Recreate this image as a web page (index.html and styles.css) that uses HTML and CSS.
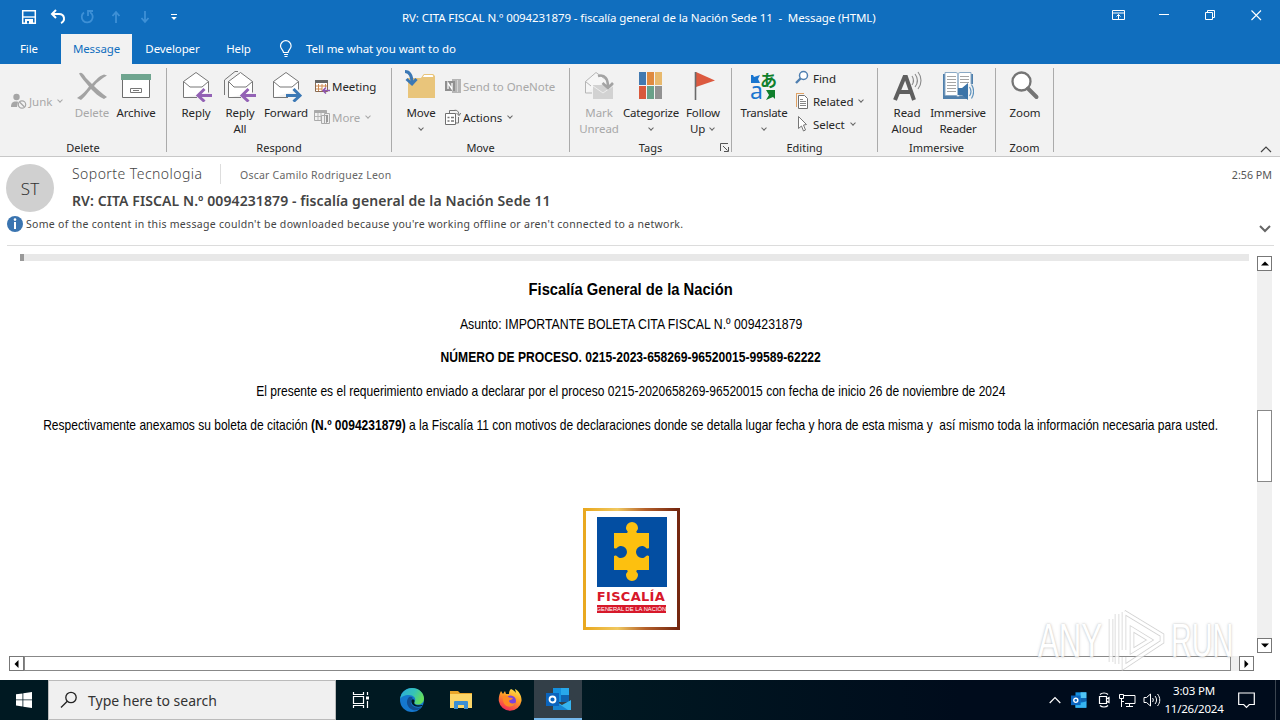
FILE: index.html
```html
<!DOCTYPE html>
<html lang="en">

<head>
    <meta charset="UTF-8">
    <meta name="viewport" content="width=device-width, initial-scale=1.0">
    <title>Message (HTML)</title>
    <link rel="stylesheet" href="styles.css">
</head>

<body>

    <div class="window">
        <!-- title bar -->
        <div class="titlebar">
            <div class="quick">
                <svg width="16" height="16" viewBox="0 0 16 16"><path d="M1.7 1.7h12.6v12.6H1.7z" fill="none" stroke="#fff" stroke-width="1.5"/><path d="M2 8h12" stroke="#fff" stroke-width="1.4"/><path d="M4 10h8v5H4z" fill="#fff"/><path d="M6 12h2v2.5H6z" fill="#106ebe"/></svg>
                <svg width="16" height="16" viewBox="0 0 16 16"><path d="M6 1L2 5l4 4M2.5 5H9c6 0 6.500 7 2 9" fill="none" stroke="#fff" stroke-width="2"/></svg>
                <svg width="16" height="16" viewBox="0 0 16 16"><path d="M5 3.500A5.500 5.500 0 1 0 11 3.200M9 7V2h5" fill="none" stroke="#3e90d6" stroke-width="1.8"/></svg>
                <svg width="16" height="16" viewBox="0 0 16 16"><path d="M8 14V3M4.500 7L8 3l3.500 4" fill="none" stroke="#3e90d6" stroke-width="1.8"/></svg>
                <svg width="16" height="16" viewBox="0 0 16 16"><path d="M8 2v11M4.500 9L8 13l3.500-4" fill="none" stroke="#3e90d6" stroke-width="1.8"/></svg>
                <svg width="16" height="16" viewBox="0 0 16 16"><path d="M5 5.500h6" stroke="#fff"/><path d="M5.200 8h5.600L8 11z" fill="#fff"/></svg>
            </div>
            <div class="title">RV: CITA FISCAL N.º 0094231879 - fiscalía general de la Nación Sede 11 &nbsp;- &nbsp;Message (HTML)</div>
            <div class="controls">
                <svg width="46" height="30" viewBox="0 0 46 30"><path d="M17.500 10.500h12v9h-12zM17.500 13h12M23.500 19v-4.500M21.500 16.500l2-2 2 2" fill="none" stroke="#fff"/></svg>
                <svg width="46" height="30" viewBox="0 0 46 30"><path d="M18 14.500h10" stroke="#fff"/></svg>
                <svg width="46" height="30" viewBox="0 0 46 30"><path d="M18.500 12.500h7v7h-7zM20.500 12v-1.500h7v7H26" fill="none" stroke="#fff"/></svg>
                <svg width="46" height="30" viewBox="0 0 46 30"><path d="M18.500 10.500l9.500 9.500M28 10.500L18.500 20" stroke="#fff" stroke-width="1.100"/></svg>
            </div>
        </div>

        <!-- tabs -->
        <div class="tabs">
            <div class="tab tab-file">File</div>
            <div class="tab active">Message</div>
            <div class="tab tab-dev">Developer</div>
            <div class="tab tab-help">Help</div>
            <svg class="bulb" width="14" height="18" viewBox="0 0 14 18"><path d="M4.500 12.500c0-2.500-3-3.500-3-6.500a5.300 5.300 0 0 1 10.600 0c0 3-3 4-3 6.500zM5 14.500h4M5.500 16.500h3" fill="none" stroke="#fff" stroke-width="1.200"/></svg>
            <div class="tell">Tell me what you want to do</div>
        </div>

        <!-- ribbon -->
        <div class="ribbon">
            <div class="group g-delete">
                <div class="tools">
                    <div class="small-col junk">
                        <div class="small off"><svg width="16" height="16" viewBox="0 0 16 16"><circle cx="5.500" cy="4" r="3.200" fill="#a6a6a6"/><path d="M0 14c0-4 1.500-5.500 5-5.500 2 0 2 .5 2 .5l-1 5z" fill="#a6a6a6"/><circle cx="11" cy="11.500" r="3.700" fill="#f2f2f2" stroke="#a6a6a6" stroke-width="1.200"/><path d="M8.500 9l5 5" stroke="#a6a6a6" stroke-width="1.200"/></svg><span>Junk</span><i class="chev"></i></div>
                    </div>
                    <div class="big off"><svg width="32" height="32" viewBox="0 0 32 32"><path d="M3 3.500c3-2 4 .5 7 4.500l6 6c4-4 7-8 12-9.500l3 1c-5 3-10 6.500-13 10.500 3 3 8 7.500 13 11l-3 2c-5-2-10-7-13-10-4 4-6 8-10 11l-4-2c5-3 9-7 12-11.500C9 12 5 7 3 3.500z" fill="#a3a3a3"/></svg><span>Delete</span></div>
                    <div class="big"><svg width="32" height="32" viewBox="0 0 32 32"><path d="M2.500 9.500h27v18h-27z" fill="#fff" stroke="#6d6d6d"/><path d="M1 4h30v6H1z" fill="#6fa58f"/><path d="M10.500 18.500h11v4h-11zM13 20.500h6" fill="none" stroke="#777"/></svg><span>Archive</span></div>
                </div>
                <div class="caption">Delete</div>
            </div>

            <div class="group g-respond">
                <div class="tools">
                    <div class="big"><svg width="32" height="32" viewBox="0 0 32 32"><path d="M3.500 27.500V11.500L16 2.500l12.500 9v11M3.500 27.500H17" fill="#fff" stroke="#777"/><path d="M3.500 11.500L10 17h12l6.500-5.500" fill="none" stroke="#777"/><path d="M18 25.500h14M24.500 19l-6.500 6.500 6.500 6" fill="none" stroke="#9362b5" stroke-width="3"/></svg><span>Reply</span></div>
                    <div class="big"><svg width="32" height="32" viewBox="0 0 32 32"><path d="M.5 25V10L11 1.500h3" fill="none" stroke="#777"/><path d="M4.500 27.500V11.500L16.500 2.500l12 9v11M4.500 27.500H17" fill="#fff" stroke="#777"/><path d="M4.500 11.500L10 17h12l6.500-5.500" fill="none" stroke="#777"/><path d="M18 25.500h14M24.500 19l-6.500 6.500 6.500 6" fill="none" stroke="#9362b5" stroke-width="3"/></svg><span>Reply<br>All</span></div>
                    <div class="big wide48"><svg width="32" height="32" viewBox="0 0 32 32"><path d="M3.500 27.500V11.500L16 2.500l12.500 9v8M3.500 27.500H18" fill="#fff" stroke="#777"/><path d="M3.500 11.500L10 17h12l6.500-5.500" fill="none" stroke="#777"/><path d="M16 25.500h14M23.500 19l6.500 6.500-6.500 6" fill="none" stroke="#3b78b5" stroke-width="3"/></svg><span>Forward</span></div>
                    <div class="small-col two respond-col">
                        <div class="small"><svg width="16" height="16" viewBox="0 0 16 16"><path d="M1.500 2.500h12v11h-12z" fill="#fff" stroke="#8a6a50"/><path d="M1 2h13v3H1z" fill="#666"/><path d="M4.500 6v7M8 6v7M11.500 6v3M2 8h11M2 11h6" stroke="#d08a50"/><path d="M9 12.500h7M12 9.500l-3 3 3 3" fill="none" stroke="#8e55b0" stroke-width="1.500"/></svg><span>Meeting</span></div>
                        <div class="small off"><svg width="16" height="16" viewBox="0 0 16 16"><path d="M.5 1.500h12v10H.5z" fill="none" stroke="#aaa"/><path d="M.5 1h12v3H.5z" fill="#aaa"/><path d="M4 4v7M7 4v7M1 7.500h8" stroke="#b5b5b5"/><path d="M7.500 6.500h5v8h-5zM10.500 4.500h5v10h-5z" fill="#eee" stroke="#aaa"/><path d="M12 6h2v7h-2z" fill="#999"/></svg><span>More</span><i class="chev"></i></div>
                    </div>
                </div>
                <div class="caption">Respond</div>
            </div>

            <div class="group g-move">
                <div class="tools">
                    <div class="big"><svg width="32" height="32" viewBox="0 0 32 32"><path d="M3 8h13l3-4h9l2 2v22H3z" fill="#e9c57b"/><path d="M19 4.500h9l1 3H17z" fill="#fff" stroke="#e9c57b"/><path d="M0 1.500c5 0 7 4 7 12" fill="none" stroke="#3b78b5" stroke-width="3"/><path d="M1.500 9l5.500 5 4.500-5" fill="none" stroke="#3b78b5" stroke-width="3"/></svg><span>Move<br><i class="chev"></i></span></div>
                    <div class="small-col two move-col">
                        <div class="small off"><svg width="16" height="16" viewBox="0 0 16 16"><path d="M7 1h9v14H7z" fill="#b5b5b5"/><path d="M0 3h10v10H0z" fill="#8f8f8f"/><path d="M3 11V5l4 6V5" fill="none" stroke="#fff" stroke-width="1.300"/><path d="M12.500 2v12" stroke="#d5d5d5"/></svg><span>Send to OneNote</span></div>
                        <div class="small"><svg width="16" height="16" viewBox="0 0 16 16"><path d="M.5 4.500h10v11H.5z" fill="#fff" stroke="#707070"/><path d="M4.500 4V1.500h6M13.500 8v6H11M9 1.500c3-1 5 1 5 5M11.500 4l2.500 2.500 2-2.500" fill="none" stroke="#777"/><path d="M2.500 8.500h2M6 8.500h3M2.500 12h2M6 12h3" stroke="#777" stroke-width="1.500"/></svg><span>Actions</span><i class="chev"></i></div>
                    </div>
                </div>
                <div class="caption">Move</div>
            </div>

            <div class="group g-tags">
                <div class="tools">
                    <div class="big off"><svg width="32" height="32" viewBox="0 0 32 32"><path d="M2.500 23V11.500L13 2.500l11 8M2.500 23H9M2.500 11.500L8 16" fill="#f6f6f6" stroke="#b5b5b5"/><path d="M10 15h20v14H10z" fill="#d2d2d2"/><path d="M10 16l10 7 10-7" fill="none" stroke="#eee"/><path d="M15 6c7-2 10 3 10 11M19.500 13l5.500 5 5-5" fill="none" stroke="#a3a3a3" stroke-width="2.600"/></svg><span>Mark<br>Unread</span></div>
                    <div class="big wide60"><svg width="32" height="32" viewBox="0 0 32 32"><path d="M4 2h7v13H4z" fill="#4279b0"/><path d="M12 2h7v13h-7z" fill="#df8a40"/><path d="M20 2h7v13h-7z" fill="#e8b96d"/><path d="M4 16h7v13H4z" fill="#d9593c"/><path d="M12 16h7v13h-7z" fill="#69a189"/><path d="M20 16h7v13h-7z" fill="#929292"/></svg><span>Categorize<br><i class="chev"></i></span></div>
                    <div class="big"><svg width="32" height="32" viewBox="0 0 32 32"><path d="M9 2l19 8.500L9 17z" fill="#dc5a40"/><path d="M8.500 2v28" stroke="#6a6a6a" stroke-width="1.600"/></svg><span>Follow<br>Up <i class="chev"></i></span></div>
                </div>
                <div class="caption">Tags</div>
                <svg class="launcher" width="9" height="9" viewBox="0 0 9 9"><path d="M.5 8V.5H8M3 3l4.500 4.500M8.500 4v4.500H4" fill="none" stroke="#555"/></svg>
            </div>

            <div class="group g-edit">
                <div class="tools">
                    <div class="big wide50"><svg width="32" height="32" viewBox="0 0 32 32"><path d="M3 5h2l1 2 6-2-2 4 2 4H3z" fill="#1a75cf"/><path d="M18 20h9v9l-2-2-7 3 3-5z" fill="#10802c"/><text x="2" y="29" class="glyph-a">a</text><text x="12" y="17" class="glyph-ja">あ</text></svg><span>Translate<br><i class="chev"></i></span></div>
                    <div class="small-col three edit-col">
                        <div class="small"><svg width="16" height="16" viewBox="0 0 16 16"><circle cx="8.500" cy="5.500" r="4" fill="#fff" stroke="#4f7fb0" stroke-width="1.500"/><path d="M5.500 8.500L1 13" stroke="#4f7fb0" stroke-width="2.400"/></svg><span>Find</span></div>
                        <div class="small"><svg width="16" height="16" viewBox="0 0 16 16"><path d="M1 .5h8M1.500 1v13" stroke="#e0a366"/><path d="M3.500 2.500h6l3 3v10h-9z" fill="#fff" stroke="#707070"/><path d="M5 6.500h3M5 8.500h6M5 10.500h6M5 12.500h6" stroke="#888"/></svg><span>Related</span><i class="chev"></i></div>
                        <div class="small"><svg width="16" height="16" viewBox="0 0 16 16"><path d="M3.500.5v12l3-2.500 2 5 2-1-2-5 3-.5z" fill="#fff" stroke="#777"/></svg><span>Select</span><i class="chev"></i></div>
                    </div>
                </div>
                <div class="caption">Editing</div>
            </div>

            <div class="group g-imm">
                <div class="tools">
                    <div class="big"><svg width="32" height="32" viewBox="0 0 32 32"><path d="M4 30L13.500 7h1.500l8 23M8 22h12" fill="none" stroke="#5f5f5f" stroke-width="4"/><path d="M21 6c2 3 2 6 0 9M24 4c3 4 3 9 0 13M27 2c4 5 4 12 0 17" fill="none" stroke="#8a8a8a" stroke-width="1.100"/></svg><span>Read<br>Aloud</span></div>
                    <div class="big wide58"><svg width="32" height="32" viewBox="0 0 32 32"><path d="M1 4h30v25H1z" fill="#4f7fab"/><path d="M3 2.500h11l2 1 2-1h11v23H18l-2 1-2-1H3z" fill="#fff" stroke="#8aa9c5"/><path d="M16 4v21" stroke="#4f7fab"/><path d="M5 6.500h9M5 9.500h9M5 12.500h9M5 15.500h9M5 18.500h9M5 21.500h9M18 6.500h9M18 9.500h9M18 12.500h9" stroke="#a5a5a5"/><path d="M25 14h7v15h-7z" fill="#f2f2f2"/><path d="M16 18h4l6-5v17l-6-5h-4z" fill="#3b74a8"/><path d="M27.500 17c2 3 2 6 0 9M29.500 14.500c3 5 3 9 0 14" fill="none" stroke="#5f93bd" stroke-width="1.200"/></svg><span>Immersive<br>Reader</span></div>
                </div>
                <div class="caption">Immersive</div>
            </div>

            <div class="group g-zoom">
                <div class="tools">
                    <div class="big"><svg width="32" height="32" viewBox="0 0 32 32"><circle cx="12.500" cy="11.500" r="9" fill="#fff" stroke="#757575" stroke-width="2.300"/><path d="M19 18.500l8.500 8.500" stroke="#757575" stroke-width="4" stroke-linecap="round"/></svg><span>Zoom</span></div>
                </div>
                <div class="caption">Zoom</div>
            </div>

            <svg class="collapse" width="12" height="7" viewBox="0 0 12 7"><path d="M1 6l5-5 5 5" fill="none" stroke="#444" stroke-width="1.200"/></svg>
        </div>

        <!-- message header -->
        <div class="header">
            <div class="avatar">ST</div>
            <div class="who">
                <div class="from-row">
                    <span class="from">Soporte Tecnologia</span>
                    <span class="to">Oscar Camilo Rodriguez Leon</span>
                    <span class="time">2:56 PM</span>
                </div>
                <div class="subject">RV: CITA FISCAL N.º 0094231879 - fiscalía general de la Nación Sede 11</div>
            </div>
        </div>
        <div class="infobar">
            <svg width="16" height="16" viewBox="0 0 16 16"><circle cx="8" cy="8" r="8" fill="#3a74b0"/><path d="M8 6v7" fill="none" stroke="#fff" stroke-width="2"/><circle cx="8" cy="3.600" r="1.300" fill="#fff"/></svg>
            <span class="info">Some of the content in this message couldn't be downloaded because you're working offline or aren't connected to a network.</span>
            <svg class="expand" width="12" height="8" viewBox="0 0 12 8"><path d="M1 1l5 5 5-5" fill="none" stroke="#666" stroke-width="2"/></svg>
        </div>

        <!-- message body -->
        <div class="reading">
            <div class="mail">
                <div class="rule"></div>
                <p class="line l1"><b>Fiscalía General de la Nación</b></p>
                <p class="line l2">Asunto: IMPORTANTE BOLETA CITA FISCAL N.º 0094231879</p>
                <p class="line l3"><b>NÚMERO DE PROCESO. 0215-2023-658269-96520015-99589-62222</b></p>
                <p class="line l4">El presente es el requerimiento enviado a declarar por el proceso 0215-2020658269-96520015 con fecha de inicio 26 de noviembre de 2024</p>
                <p class="line l5">Respectivamente anexamos su boleta de citación <b>(N.º 0094231879)</b> a la Fiscalía 11 con motivos de declaraciones donde se detalla lugar fecha y hora de esta misma y&nbsp; así mismo toda la información necesaria para usted.</p>
                <div class="logo">
                    <svg width="70" height="70" viewBox="0 0 70 70">
                        <path d="M0 0h70v70H0z" fill="#034ea2"/>
                        <path d="M17 16h13c2-2-1-2-1-5a6 6 0 0 1 12 0c0 3-3 3-1 5h12v15c-3 2-3-2-7-2a5 5 0 0 0 0 12c4 0 4-4 7-2v14H40c-2 2 1 2 1 5a6 6 0 0 1-12 0c0-3 3-3 1-5H17V39c3-2 3 2 7 2a5 5 0 0 0 0-12c-4 0-4 4-7 2z" fill="#fdc00f"/>
                    </svg>
                    <div class="logo-name">FISCALÍA</div>
                    <div class="logo-sub">GENERAL DE LA NACIÓN</div>
                </div>
            </div>
            <div class="vscroll">
                <div class="sbtn"><svg width="8" height="5" viewBox="0 0 8 5"><path d="M0 4.500h8L4 .5z" fill="#000"/></svg></div>
                <div class="vthumb"></div>
                <div class="sbtn"><svg width="8" height="5" viewBox="0 0 8 5"><path d="M0 .5h8L4 4.500z" fill="#000"/></svg></div>
            </div>
        </div>
        <div class="hscroll">
            <div class="sbtn"><svg width="5" height="8" viewBox="0 0 5 8"><path d="M4.500 0v8L.5 4z" fill="#000"/></svg></div>
            <div class="hthumb"></div>
            <div class="sbtn"><svg width="5" height="8" viewBox="0 0 5 8"><path d="M.5 0v8l4-4z" fill="#000"/></svg></div>
        </div>
    </div>

    <!-- taskbar -->
    <div class="taskbar">
        <div class="start"><svg width="16" height="16" viewBox="0 0 16 16"><path d="M0 2.300l6.500-.9v6H0zM7.300 1.300L16 0v7.400H7.300zM0 8.300h6.500v6.200L0 13.600zM7.300 8.300H16V16l-8.700-1.300z" fill="#fff"/></svg></div>
        <div class="search">
            <svg width="18" height="18" viewBox="0 0 18 18"><circle cx="11" cy="6.500" r="5.200" fill="none" stroke="#222" stroke-width="1.300"/><path d="M7.300 10.200L1 16.500" stroke="#222" stroke-width="1.300"/></svg>
            <span>Type here to search</span>
        </div>
        <div class="task task-view"><svg width="18" height="16" viewBox="0 0 18 16"><path d="M1.500 0v2.500h10V0M1.500 16v-2.500h10V16M1.500 4.500h10v7h-10zM15.500 0v3M15.500 9v7" fill="none" stroke="#fff" stroke-width="1.200"/><path d="M14 4.500h3v3h-3z" fill="#fff"/></svg></div>
        <div class="task"><svg width="24" height="24" viewBox="0 0 24 24">
            <defs>
                <linearGradient id="edgeA" x1="0" y1="0" x2="1" y2=".4"><stop offset="0" stop-color="#2aa8e0"/><stop offset=".6" stop-color="#36c3b6"/><stop offset="1" stop-color="#63dc5c"/></linearGradient>
            </defs>
            <circle cx="12" cy="12" r="12" fill="#1578cf"/>
            <path d="M.2 11C1 4 6 0 12 0c7 0 12 5 12 10.500 0 4-3 6-6.500 6-3 0-4-1.200-3-2.500C17 10 13 7 9 7 4.500 7 1 9 .2 11z" fill="url(#edgeA)"/>
            <path d="M9 9c-4 4-2 11 4 13 4 1 7-1 9-3-6 2-12-1-11-6 .3-1.500 1.500-2.500 2-2.700C12 8.500 10 8.500 9 9z" fill="#114d91"/>
            <path d="M11.500 12c-1 5 4 8 10.500 6 1-.6.5-1.300 0-1-4 1-9 0-7.500-3.500.5-2-2-3-3-1.500z" fill="#001922"/></svg></div>
        <div class="task"><svg width="22" height="20" viewBox="0 0 22 20"><path d="M0 1h8l2 2h12v15H0z" fill="#e8a52a"/><path d="M0 4h22v14H0z" fill="#fbd568"/><path d="M4 19v-7q0-1 1-1h12q1 0 1 1v7h-4v-4H8v4z" fill="#3b8ed4"/></svg></div>
        <div class="task"><svg width="24" height="24" viewBox="0 0 24 24">
            <defs>
                <linearGradient id="foxA" x1=".8" y1="0" x2=".3" y2="1"><stop offset="0" stop-color="#ffe84a"/><stop offset=".45" stop-color="#ff9a26"/><stop offset="1" stop-color="#f5275a"/></linearGradient>
            </defs>
            <path d="M13 1c3 1 4 3 5 4l-1-4c4 2 7 7 6.500 12A11.500 11.500 0 0 1 .8 13C.5 9 1.500 6 3 3l2 3 2-3 1 3h3c0-2 .5-4 2-5z" fill="url(#foxA)"/>
            <circle cx="12.500" cy="13" r="5.500" fill="#7a43dd"/>
            <path d="M5 8c3-1 5 0 6 1.500l4 .5c-1 2-3 2-4 2.500 0 3 4 4 7 2-2 5-9 6-12 1-1-2-1.500-5-1-7.500z" fill="#ff8a24"/></svg></div>
        <div class="task active-task"><svg width="25" height="22" viewBox="0 0 25 22"><path d="M7 0h16v14H7z" fill="#1490df"/><path d="M15 0h8v7h-8z" fill="#28a8ea"/><path d="M15 7h8v7h-8z" fill="#0f64b0"/><path d="M7 12l9 5 9-5v10H7z" fill="#36b4ef"/><path d="M7 22V12l15 10z" fill="#1785d2"/><path d="M0 5h13v13H0z" fill="#0a64bd"/><circle cx="6.500" cy="11.500" r="3" fill="none" stroke="#fff" stroke-width="1.800"/></svg></div>
        <div class="tray">
            <svg width="12" height="8" viewBox="0 0 12 8"><path d="M.7 7L6 1.500 11.300 7" fill="none" stroke="#fff" stroke-width="1.200"/></svg>
            <svg class="tray-ol" width="16" height="16" viewBox="0 0 25 24"><path d="M7 0h17v24H7z" fill="#1490df"/><path d="M15 0h9v9h-9z" fill="#50c5f5"/><path d="M15 9h9v6h-9z" fill="#0f64b0"/><path d="M7 20l17-6v10H7z" fill="#36b4ef"/><path d="M0 5h15v15H0z" fill="#0a64bd"/><circle cx="7.500" cy="12.500" r="3.200" fill="none" stroke="#fff" stroke-width="2.200"/></svg>
            <svg class="tray-cam" width="12" height="16" viewBox="0 0 12 16"><path d="M2 2.500c2-2 6-2 8 0M2 13.500c2 2 6 2 8 0M1.500 4.500h7v7h-7zM8.500 7l2.500-1.500v5L8.500 9" fill="none" stroke="#fff" stroke-width="1.200"/></svg>
            <svg class="tray-net" width="17" height="15" viewBox="0 0 17 15"><path d="M5 2.500h11v8H6M10.500 11v3M7 13.500h7M.5 1.500h4v4h-4zM2.500 6v8M2.500 8.500H5" fill="none" stroke="#fff"/></svg>
            <svg class="tray-vol" width="18" height="14" viewBox="0 0 18 14"><path d="M1 4.500h2.500L7.500 1v12l-4-3.500H1zM9.500 5c1 1.200 1 2.800 0 4M12 3c2 2.400 2 5.600 0 8M14.500 1c3 3.500 3 8.500 0 12" fill="none" stroke="#fff"/></svg>
            <div class="clock"><span>3:03 PM</span><span>11/26/2024</span></div>
            <svg width="17" height="17" viewBox="0 0 17 17"><path d="M.7 1h15.600v11.500h-5L8.500 15.300l-2.800-2.800h-5z" fill="none" stroke="#fff" stroke-width="1.200"/></svg>
        </div>
    </div>

    <div class="watermark">
        <span class="mark-any">ANY</span>
        <svg width="58" height="62" viewBox="0 0 58 62">
            <path d="M4 10v43M10 5v50M17 3l38 23v7L17 58V48M17 3v38M25 20v22l18-11z" fill="none" stroke="#c4c4c4" stroke-width="4.500"/>
            <path d="M4 10v43M10 5v50M17 3l38 23v7L17 58V48M17 3v38M25 20v22l18-11z" fill="none" stroke="#fff" stroke-width="3"/>
        </svg>
        <span class="mark-run">RUN</span>
    </div>

</body>

</html>
```
FILE: styles.css
```css
* {
    margin: 0;
    padding: 0;
    box-sizing: border-box;
}

body {
    width: 1280px;
    height: 720px;
    overflow: hidden;
    position: relative;
    background: #fff;
    font-family: "Noto Sans", "Open Sans", sans-serif;
    font-size: 11.5px;
    color: #262626;
}

svg {
    display: block;
    flex: none;
}

span,
.title,
.tell,
.subject {
    white-space: nowrap;
}

.window {
    height: 680px;
    display: flex;
    flex-direction: column;
}

/* title bar */
.titlebar {
    height: 34px;
    background: #106ebe;
    display: flex;
    color: #fff;
}

.quick {
    display: flex;
    gap: 13px;
    padding: 9px 0 0 21px;
    width: 402px;
}

.title {
    line-height: 36px;
    letter-spacing: -0.1px;
}

.controls {
    display: flex;
    margin-left: auto;
    margin-right: 1px;
}

/* tabs */
.tabs {
    height: 30px;
    background: #106ebe;
    display: flex;
    color: #fff;
    line-height: 30px;
}

.tab {
    text-align: center;
    letter-spacing: -0.1px;
}

.tab-file {
    width: 61px;
    padding-right: 3px;
}

.active {
    width: 71px;
    background: #f2f2f2;
    color: #106ebe;
}

.tab-dev {
    width: 81px;
}

.tab-help {
    width: 51px;
}

.bulb {
    margin: 6px 13px 0 15px;
}

.tell {
    letter-spacing: -0.07px;
}

/* ribbon */
.ribbon {
    height: 93px;
    background: #f2f2f2;
    border-bottom: 1px solid #c8c8c8;
    display: flex;
    padding-top: 4px;
    position: relative;
}

.group {
    height: 84px;
    border-right: 1px solid #ababab;
    position: relative;
    display: flex;
    flex-direction: column;
}

.g-delete {
    width: 167px;
}

.g-respond {
    width: 225px;
}

.g-move {
    width: 178px;
}

.g-tags {
    width: 162px;
}

.g-edit {
    width: 146px;
}

.g-imm {
    width: 118px;
}

.g-zoom {
    width: 58px;
}

.tools {
    height: 72px;
    flex: none;
    display: flex;
    padding: 2px 0 0 7px;
}

.g-delete .tools {
    padding-left: 0;
}

.caption {
    height: 16px;
    flex: none;
    line-height: 16px;
    text-align: center;
    font-size: 11px;
}

.big {
    width: 44px;
    display: flex;
    flex-direction: column;
    align-items: center;
    text-align: center;
    line-height: 16px;
    letter-spacing: -0.1px;
}

.big > span {
    margin-top: 3px;
}

.wide48 {
    width: 48px;
}

.wide50 {
    width: 50px;
    letter-spacing: -0.3px;
}

.wide58 {
    width: 58px;
    letter-spacing: -0.2px;
}

.wide60 {
    width: 60px;
    letter-spacing: -0.2px;
}

.off {
    color: #a8a8a8;
}

.small-col {
    display: flex;
    flex-direction: column;
}

.junk {
    width: 70px;
    padding: 21px 0 0 11px;
}

.two {
    padding-top: 6px;
    gap: 11px;
}

.three {
    gap: 3px;
    margin-top: -2px;
}

.respond-col {
    padding-left: 4px;
}

.move-col {
    padding-left: 2px;
}

.edit-col {
    padding-left: 6px;
}

.small {
    display: flex;
    align-items: center;
    gap: 2px;
    height: 20px;
    letter-spacing: -0.05px;
}

.chev {
    display: inline-block;
    width: 4px;
    height: 4px;
    border-right: 1px solid #666;
    border-bottom: 1px solid #666;
    transform: rotate(45deg);
    margin: 0 2px 3px 2px;
    vertical-align: middle;
}

.small .chev {
    margin-left: 4px;
}

.off .chev {
    border-color: #a8a8a8;
}

.glyph-a {
    font: 23px "Noto Sans", sans-serif;
    fill: #1a75cf;
}

.glyph-ja {
    font: bold 17px "Noto Sans CJK JP", sans-serif;
    fill: #10802c;
}

.launcher {
    position: absolute;
    right: 2px;
    bottom: 0;
}

.collapse {
    position: absolute;
    right: 8px;
    bottom: 3px;
}

/* message header */
.header {
    height: 57px;
    display: flex;
    padding: 7px 8px 0 6px;
    color: #444;
}

.avatar {
    width: 48px;
    height: 48px;
    border-radius: 50%;
    background: #d0d0d0;
    font-size: 17px;
    font-weight: 300;
    line-height: 49px;
    text-align: center;
    color: #333;
}

.who {
    flex: 1;
    padding-left: 18px;
}

.from-row {
    display: flex;
    align-items: center;
    height: 22px;
}

.from {
    font-size: 14px;
    font-weight: 300;
    letter-spacing: 0.45px;
    line-height: 20px;
    margin-top: -2px;
    width: 149px;
    border-right: 1px solid #ddd;
    color: #444;
}

.to {
    font-size: 10.5px;
    letter-spacing: 0.23px;
    margin-left: 19px;
    color: #666;
}

.time {
    margin-left: auto;
    font-size: 10.7px;
    color: #555;
}

.subject {
    font-size: 14px;
    line-height: 30px;
    font-weight: 600;
    letter-spacing: 0.09px;
}

.infobar {
    height: 32px;
    margin: 0 6px 0 7px;
    border-bottom: 1px solid #dcdcdc;
    display: flex;
    padding-top: 2px;
    gap: 3px;
}

.info {
    font-size: 10.5px;
    line-height: 16px;
    letter-spacing: 0.295px;
    color: #444;
}

.expand {
    margin: 9px 3px 0 auto;
}

/* message body */
.reading {
    height: 408px;
    display: flex;
    padding-top: 8px;
}

.mail {
    width: 1249px;
    flex: none;
    margin-right: 8px;
    padding-left: 13px;
    display: flex;
    flex-direction: column;
    align-items: center;
    font-family: "Liberation Sans", sans-serif;
    color: #000;
}

.rule {
    align-self: stretch;
    height: 7px;
    margin-left: 7px;
    background: #e8e8e8;
    border-left: 4px solid #999;
}

/* condensed text */
.line {
    font-size: 14.5px;
    line-height: 20px;
    margin-bottom: 14px;
    white-space: nowrap;
    transform: scaleX(0.829);
}

.l1 {
    font-size: 17px;
    margin-top: 19px;
    margin-bottom: 14px;
    transform: scaleX(0.868);
}

.l2 {
    margin-bottom: 13px;
    transform: scaleX(0.847);
}

.l3 {
    transform: scaleX(0.835);
}

.logo {
    width: 97px;
    height: 122px;
    margin-top: 59px;
    border: 3px solid;
    border-image: linear-gradient(90deg, #e9a81f, #f0c860 35%, #b4602b 65%, #74260f) 1;
    padding: 6px 11px;
    color: #d7182a;
}

.logo-name {
    font: bold 13px/15px "DejaVu Sans", sans-serif;
    margin-top: 2px;
    text-align: center;
    letter-spacing: 0.3px;
}

.logo-sub {
    background: #d7182a;
    color: #fff;
    font: 5.8px/8px "Liberation Sans", sans-serif;
    margin-top: 1px;
    text-align: center;
    white-space: nowrap;
}

.vscroll {
    width: 15px;
    height: 397px;
    margin-top: 2px;
    background: #f0f0f0;
    display: flex;
    flex-direction: column;
}

.sbtn {
    width: 15px;
    height: 15px;
    background: #fff;
    border: 1px solid #777;
    display: flex;
    align-items: center;
    justify-content: center;
    flex: none;
}

.vthumb {
    height: 72px;
    margin: 139px 0 auto;
    background: #fff;
    border: 1px solid #888;
}

.hscroll {
    display: flex;
    width: 1245px;
    height: 15px;
    margin: 2px 0 0 9px;
    background: #f0f0f0;
}

.hthumb {
    width: 1207px;
    margin-right: auto;
    background: #fff;
    border: 1px solid #888;
}

/* taskbar */
.taskbar {
    height: 40px;
    background: linear-gradient(90deg, #001922 45%, #000c1c 75%);
    display: flex;
    color: #fff;
}

.start {
    width: 48px;
    padding: 12px 16px;
}

.search {
    width: 288px;
    background: #f0f0f0;
    border: 1px solid #bbb;
    display: flex;
    align-items: center;
    gap: 10px;
    padding-left: 11px;
    color: #333;
    font-size: 14px;
}

.task {
    width: 49px;
    display: flex;
    align-items: center;
    justify-content: center;
}

.task-view {
    width: 51px;
    padding-right: 2px;
}

.active-task {
    width: 48px;
    background: #333f48;
    border-bottom: 2px solid #76b9ed;
}

.tray {
    margin-left: auto;
    margin-right: 4px;
    padding-right: 20px;
    border-right: 1px solid #3b4550;
    display: flex;
    align-items: center;
}

.tray-ol {
    margin-left: 10px;
}

.tray-cam {
    margin-left: 11px;
}

.tray-net {
    margin-left: 9px;
}

.tray-vol {
    margin-left: 7px;
}

.clock {
    width: 60px;
    margin: 0 14px 0 3px;
    display: flex;
    flex-direction: column;
    align-items: center;
    line-height: 18px;
    letter-spacing: -0.2px;
}

/* watermark */
.watermark {
    position: absolute;
    left: 1038px;
    top: 609px;
    display: flex;
    align-items: center;
    gap: 6px;
    font: 48px "Liberation Sans", sans-serif;
    color: #fff;
    opacity: 0.75;
    text-shadow: 0 0 3px #999;
}

.mark-any,
.mark-run {
    width: 63px;
    transform: scaleX(0.65);
    transform-origin: left;
}

.mark-run {
    transform: scaleX(0.6);
}
```
